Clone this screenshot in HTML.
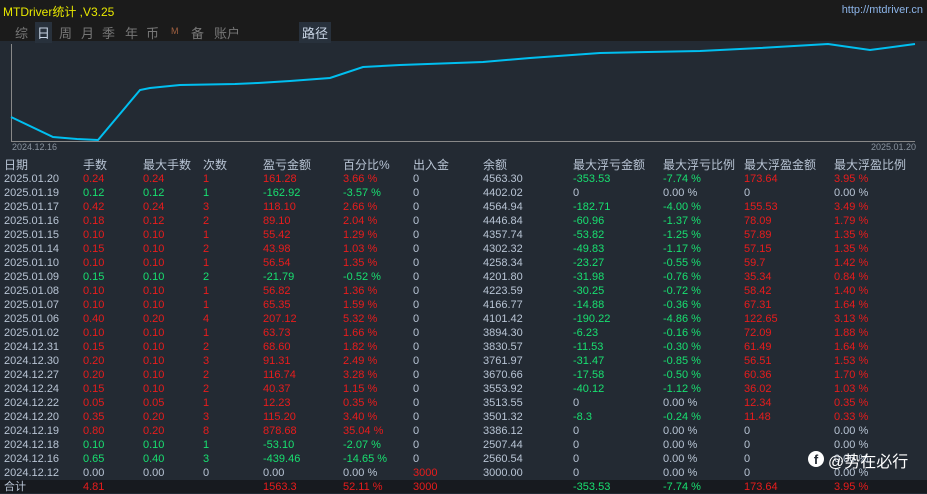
<!DOCTYPE html>
<html><head><meta charset="utf-8"><style>
body{margin:0;width:927px;height:493px;background:#232a33;overflow:hidden;font-family:"Liberation Sans","Noto Sans CJK SC",sans-serif;font-size:11px;color:#b8c4d4;position:relative}
.top{position:absolute;left:0;top:0;width:927px;height:41px;background:#1b1b1b}
.title{position:absolute;left:3px;top:3px;color:#e8e800;font-size:12px}
.url{position:absolute;right:4px;top:4px;color:#8cb4e8;font-size:11px}
.tabs{position:absolute;left:0;top:23px;font-size:13px;color:#777}
.tabs span{position:absolute;white-space:nowrap}
.row{position:absolute;left:0;height:13px;line-height:13px;width:927px;white-space:nowrap}
.row span{position:absolute;top:0}
.r{color:#e81c1c}.g{color:#18e070}
.hd{color:#b8c4d4;font-size:12px}
</style></head><body>
<div class="top">
<div class="title">MTDriver统计 ,V3.25</div>
<div class="url">http://mtdriver.cn</div>
<div class="tabs">
<span style="left:15px">综</span>
<span style="left:35px;top:-1px;background:#28313c;color:#c8d4e4;padding:1px 2px">日</span>
<span style="left:59px">周</span><span style="left:81px">月</span><span style="left:102px">季</span><span style="left:125px">年</span><span style="left:146px">币</span><span style="left:171px;font-size:9px;top:3px;color:#a06040">M</span><span style="left:191px">备</span><span style="left:214px">账户</span>
<span style="left:299px;top:-1px;background:#28313c;color:#c8d4e4;padding:1px 3px">路径</span>
</div>
</div>
<svg style="position:absolute;left:0;top:41px" width="927" height="115">
<line x1="11.5" y1="3" x2="11.5" y2="100" stroke="#888" stroke-width="1"/>
<line x1="11" y1="100.5" x2="915" y2="100.5" stroke="#888" stroke-width="1"/>
<polyline fill="none" stroke="#00bff0" stroke-width="2" points="11,76 53,96 65,97 77,98 98,99 140,49 150,47 180,44 235,43 258,42 290,40 330,37 363,26 400,24 483,21 530,17 600,12 700,10 760,7 828,3 870,9 915,3"/>
<text x="12" y="109" fill="#8a94a0" font-size="9" font-family="Liberation Sans">2024.12.16</text>
<text x="871" y="109" fill="#8a94a0" font-size="9" font-family="Liberation Sans">2025.01.20</text>
</svg>
<div class="row hd" style="top:158.5px"><span style="left:4px">日期</span><span style="left:83px">手数</span><span style="left:143px">最大手数</span><span style="left:203px">次数</span><span style="left:263px">盈亏金额</span><span style="left:343px">百分比%</span><span style="left:413px">出入金</span><span style="left:483px">余额</span><span style="left:573px">最大浮亏金额</span><span style="left:663px">最大浮亏比例</span><span style="left:744px">最大浮盈金额</span><span style="left:834px">最大浮盈比例</span></div>
<div class="row" style="top:172.5px"><span style="left:4px">2025.01.20</span><span class="r" style="left:83px">0.24</span><span class="r" style="left:143px">0.24</span><span class="r" style="left:203px">1</span><span class="r" style="left:263px">161.28</span><span class="r" style="left:343px">3.66 %</span><span style="left:413px">0</span><span style="left:483px">4563.30</span><span class="g" style="left:573px">-353.53</span><span class="g" style="left:663px">-7.74 %</span><span class="r" style="left:744px">173.64</span><span class="r" style="left:834px">3.95 %</span></div>
<div class="row" style="top:186.5px"><span style="left:4px">2025.01.19</span><span class="g" style="left:83px">0.12</span><span class="g" style="left:143px">0.12</span><span class="g" style="left:203px">1</span><span class="g" style="left:263px">-162.92</span><span class="g" style="left:343px">-3.57 %</span><span style="left:413px">0</span><span style="left:483px">4402.02</span><span style="left:573px">0</span><span style="left:663px">0.00 %</span><span style="left:744px">0</span><span style="left:834px">0.00 %</span></div>
<div class="row" style="top:200.5px"><span style="left:4px">2025.01.17</span><span class="r" style="left:83px">0.42</span><span class="r" style="left:143px">0.24</span><span class="r" style="left:203px">3</span><span class="r" style="left:263px">118.10</span><span class="r" style="left:343px">2.66 %</span><span style="left:413px">0</span><span style="left:483px">4564.94</span><span class="g" style="left:573px">-182.71</span><span class="g" style="left:663px">-4.00 %</span><span class="r" style="left:744px">155.53</span><span class="r" style="left:834px">3.49 %</span></div>
<div class="row" style="top:214.5px"><span style="left:4px">2025.01.16</span><span class="r" style="left:83px">0.18</span><span class="r" style="left:143px">0.12</span><span class="r" style="left:203px">2</span><span class="r" style="left:263px">89.10</span><span class="r" style="left:343px">2.04 %</span><span style="left:413px">0</span><span style="left:483px">4446.84</span><span class="g" style="left:573px">-60.96</span><span class="g" style="left:663px">-1.37 %</span><span class="r" style="left:744px">78.09</span><span class="r" style="left:834px">1.79 %</span></div>
<div class="row" style="top:228.5px"><span style="left:4px">2025.01.15</span><span class="r" style="left:83px">0.10</span><span class="r" style="left:143px">0.10</span><span class="r" style="left:203px">1</span><span class="r" style="left:263px">55.42</span><span class="r" style="left:343px">1.29 %</span><span style="left:413px">0</span><span style="left:483px">4357.74</span><span class="g" style="left:573px">-53.82</span><span class="g" style="left:663px">-1.25 %</span><span class="r" style="left:744px">57.89</span><span class="r" style="left:834px">1.35 %</span></div>
<div class="row" style="top:242.5px"><span style="left:4px">2025.01.14</span><span class="r" style="left:83px">0.15</span><span class="r" style="left:143px">0.10</span><span class="r" style="left:203px">2</span><span class="r" style="left:263px">43.98</span><span class="r" style="left:343px">1.03 %</span><span style="left:413px">0</span><span style="left:483px">4302.32</span><span class="g" style="left:573px">-49.83</span><span class="g" style="left:663px">-1.17 %</span><span class="r" style="left:744px">57.15</span><span class="r" style="left:834px">1.35 %</span></div>
<div class="row" style="top:256.5px"><span style="left:4px">2025.01.10</span><span class="r" style="left:83px">0.10</span><span class="r" style="left:143px">0.10</span><span class="r" style="left:203px">1</span><span class="r" style="left:263px">56.54</span><span class="r" style="left:343px">1.35 %</span><span style="left:413px">0</span><span style="left:483px">4258.34</span><span class="g" style="left:573px">-23.27</span><span class="g" style="left:663px">-0.55 %</span><span class="r" style="left:744px">59.7</span><span class="r" style="left:834px">1.42 %</span></div>
<div class="row" style="top:270.5px"><span style="left:4px">2025.01.09</span><span class="g" style="left:83px">0.15</span><span class="g" style="left:143px">0.10</span><span class="g" style="left:203px">2</span><span class="g" style="left:263px">-21.79</span><span class="g" style="left:343px">-0.52 %</span><span style="left:413px">0</span><span style="left:483px">4201.80</span><span class="g" style="left:573px">-31.98</span><span class="g" style="left:663px">-0.76 %</span><span class="r" style="left:744px">35.34</span><span class="r" style="left:834px">0.84 %</span></div>
<div class="row" style="top:284.5px"><span style="left:4px">2025.01.08</span><span class="r" style="left:83px">0.10</span><span class="r" style="left:143px">0.10</span><span class="r" style="left:203px">1</span><span class="r" style="left:263px">56.82</span><span class="r" style="left:343px">1.36 %</span><span style="left:413px">0</span><span style="left:483px">4223.59</span><span class="g" style="left:573px">-30.25</span><span class="g" style="left:663px">-0.72 %</span><span class="r" style="left:744px">58.42</span><span class="r" style="left:834px">1.40 %</span></div>
<div class="row" style="top:298.5px"><span style="left:4px">2025.01.07</span><span class="r" style="left:83px">0.10</span><span class="r" style="left:143px">0.10</span><span class="r" style="left:203px">1</span><span class="r" style="left:263px">65.35</span><span class="r" style="left:343px">1.59 %</span><span style="left:413px">0</span><span style="left:483px">4166.77</span><span class="g" style="left:573px">-14.88</span><span class="g" style="left:663px">-0.36 %</span><span class="r" style="left:744px">67.31</span><span class="r" style="left:834px">1.64 %</span></div>
<div class="row" style="top:312.5px"><span style="left:4px">2025.01.06</span><span class="r" style="left:83px">0.40</span><span class="r" style="left:143px">0.20</span><span class="r" style="left:203px">4</span><span class="r" style="left:263px">207.12</span><span class="r" style="left:343px">5.32 %</span><span style="left:413px">0</span><span style="left:483px">4101.42</span><span class="g" style="left:573px">-190.22</span><span class="g" style="left:663px">-4.86 %</span><span class="r" style="left:744px">122.65</span><span class="r" style="left:834px">3.13 %</span></div>
<div class="row" style="top:326.5px"><span style="left:4px">2025.01.02</span><span class="r" style="left:83px">0.10</span><span class="r" style="left:143px">0.10</span><span class="r" style="left:203px">1</span><span class="r" style="left:263px">63.73</span><span class="r" style="left:343px">1.66 %</span><span style="left:413px">0</span><span style="left:483px">3894.30</span><span class="g" style="left:573px">-6.23</span><span class="g" style="left:663px">-0.16 %</span><span class="r" style="left:744px">72.09</span><span class="r" style="left:834px">1.88 %</span></div>
<div class="row" style="top:340.5px"><span style="left:4px">2024.12.31</span><span class="r" style="left:83px">0.15</span><span class="r" style="left:143px">0.10</span><span class="r" style="left:203px">2</span><span class="r" style="left:263px">68.60</span><span class="r" style="left:343px">1.82 %</span><span style="left:413px">0</span><span style="left:483px">3830.57</span><span class="g" style="left:573px">-11.53</span><span class="g" style="left:663px">-0.30 %</span><span class="r" style="left:744px">61.49</span><span class="r" style="left:834px">1.64 %</span></div>
<div class="row" style="top:354.5px"><span style="left:4px">2024.12.30</span><span class="r" style="left:83px">0.20</span><span class="r" style="left:143px">0.10</span><span class="r" style="left:203px">3</span><span class="r" style="left:263px">91.31</span><span class="r" style="left:343px">2.49 %</span><span style="left:413px">0</span><span style="left:483px">3761.97</span><span class="g" style="left:573px">-31.47</span><span class="g" style="left:663px">-0.85 %</span><span class="r" style="left:744px">56.51</span><span class="r" style="left:834px">1.53 %</span></div>
<div class="row" style="top:368.5px"><span style="left:4px">2024.12.27</span><span class="r" style="left:83px">0.20</span><span class="r" style="left:143px">0.10</span><span class="r" style="left:203px">2</span><span class="r" style="left:263px">116.74</span><span class="r" style="left:343px">3.28 %</span><span style="left:413px">0</span><span style="left:483px">3670.66</span><span class="g" style="left:573px">-17.58</span><span class="g" style="left:663px">-0.50 %</span><span class="r" style="left:744px">60.36</span><span class="r" style="left:834px">1.70 %</span></div>
<div class="row" style="top:382.5px"><span style="left:4px">2024.12.24</span><span class="r" style="left:83px">0.15</span><span class="r" style="left:143px">0.10</span><span class="r" style="left:203px">2</span><span class="r" style="left:263px">40.37</span><span class="r" style="left:343px">1.15 %</span><span style="left:413px">0</span><span style="left:483px">3553.92</span><span class="g" style="left:573px">-40.12</span><span class="g" style="left:663px">-1.12 %</span><span class="r" style="left:744px">36.02</span><span class="r" style="left:834px">1.03 %</span></div>
<div class="row" style="top:396.5px"><span style="left:4px">2024.12.22</span><span class="r" style="left:83px">0.05</span><span class="r" style="left:143px">0.05</span><span class="r" style="left:203px">1</span><span class="r" style="left:263px">12.23</span><span class="r" style="left:343px">0.35 %</span><span style="left:413px">0</span><span style="left:483px">3513.55</span><span style="left:573px">0</span><span style="left:663px">0.00 %</span><span class="r" style="left:744px">12.34</span><span class="r" style="left:834px">0.35 %</span></div>
<div class="row" style="top:410.5px"><span style="left:4px">2024.12.20</span><span class="r" style="left:83px">0.35</span><span class="r" style="left:143px">0.20</span><span class="r" style="left:203px">3</span><span class="r" style="left:263px">115.20</span><span class="r" style="left:343px">3.40 %</span><span style="left:413px">0</span><span style="left:483px">3501.32</span><span class="g" style="left:573px">-8.3</span><span class="g" style="left:663px">-0.24 %</span><span class="r" style="left:744px">11.48</span><span class="r" style="left:834px">0.33 %</span></div>
<div class="row" style="top:424.5px"><span style="left:4px">2024.12.19</span><span class="r" style="left:83px">0.80</span><span class="r" style="left:143px">0.20</span><span class="r" style="left:203px">8</span><span class="r" style="left:263px">878.68</span><span class="r" style="left:343px">35.04 %</span><span style="left:413px">0</span><span style="left:483px">3386.12</span><span style="left:573px">0</span><span style="left:663px">0.00 %</span><span style="left:744px">0</span><span style="left:834px">0.00 %</span></div>
<div class="row" style="top:438.5px"><span style="left:4px">2024.12.18</span><span class="g" style="left:83px">0.10</span><span class="g" style="left:143px">0.10</span><span class="g" style="left:203px">1</span><span class="g" style="left:263px">-53.10</span><span class="g" style="left:343px">-2.07 %</span><span style="left:413px">0</span><span style="left:483px">2507.44</span><span style="left:573px">0</span><span style="left:663px">0.00 %</span><span style="left:744px">0</span><span style="left:834px">0.00 %</span></div>
<div class="row" style="top:452.5px"><span style="left:4px">2024.12.16</span><span class="g" style="left:83px">0.65</span><span class="g" style="left:143px">0.40</span><span class="g" style="left:203px">3</span><span class="g" style="left:263px">-439.46</span><span class="g" style="left:343px">-14.65 %</span><span style="left:413px">0</span><span style="left:483px">2560.54</span><span style="left:573px">0</span><span style="left:663px">0.00 %</span><span style="left:744px">0</span><span style="left:834px">0.00 %</span></div>
<div class="row" style="top:466.5px"><span style="left:4px">2024.12.12</span><span style="left:83px">0.00</span><span style="left:143px">0.00</span><span style="left:203px">0</span><span style="left:263px">0.00</span><span style="left:343px">0.00 %</span><span class="r" style="left:413px">3000</span><span style="left:483px">3000.00</span><span style="left:573px">0</span><span style="left:663px">0.00 %</span><span style="left:744px">0</span><span style="left:834px">0.00 %</span></div>
<div style="position:absolute;left:0;top:480px;width:927px;height:13px;background:#171a1f"></div>
<div class="row" style="top:481px"><span style="left:4px">合计</span><span class="r" style="left:83px">4.81</span><span class="r" style="left:263px">1563.3</span><span class="r" style="left:343px">52.11 %</span><span class="r" style="left:413px">3000</span><span class="g" style="left:573px">-353.53</span><span class="g" style="left:663px">-7.74 %</span><span class="r" style="left:744px">173.64</span><span class="r" style="left:834px">3.95 %</span></div>
<div style="position:absolute;left:808px;top:451px;width:16px;height:16px;border-radius:50%;background:#fff;color:#232a33;font-weight:bold;font-size:13px;line-height:18px;text-align:center">f</div>
<div style="position:absolute;left:828px;top:448px;color:#fff;font-size:16px">@势在必行</div>
</body></html>
